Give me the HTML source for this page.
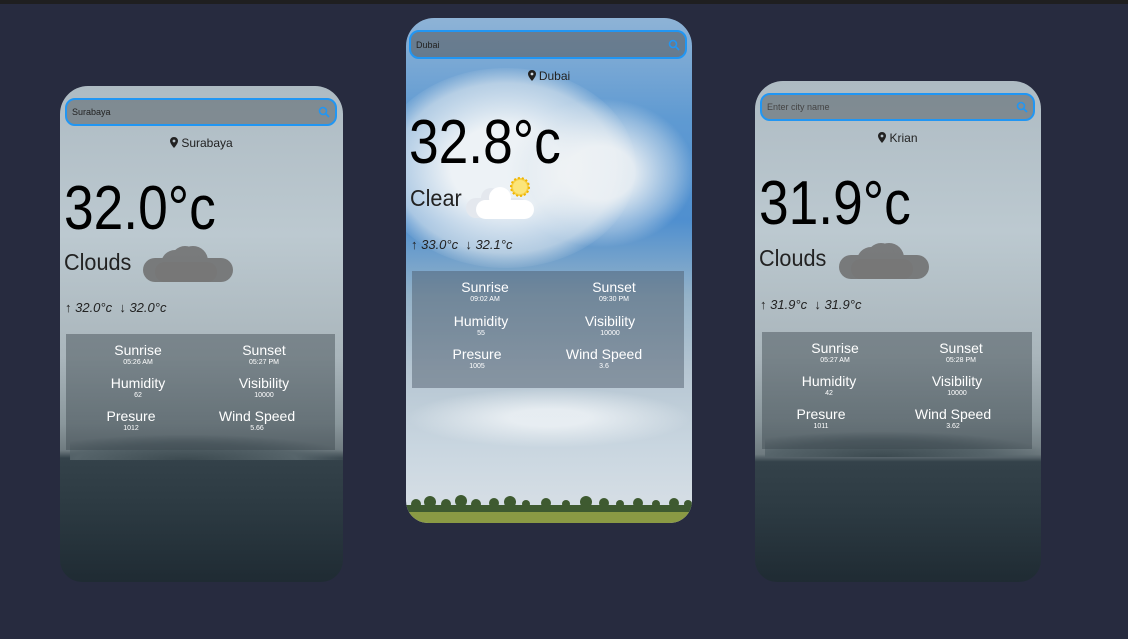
<!DOCTYPE html>
<html><head><meta charset="utf-8"><style>
*{margin:0;padding:0;box-sizing:border-box}
body{width:1128px;height:639px;background:#272b3f;position:relative;overflow:hidden;font-family:"Liberation Sans",sans-serif}
.top{position:absolute;left:0;top:0;width:1128px;height:4px;background:#1f1f20}
.card{position:absolute;overflow:hidden;border-radius:28px 28px 22px 22px}
.ab{position:absolute}
.search{position:absolute;border:2px solid #2196f3;border-radius:10px;background:rgba(95,105,112,.6);font-size:9px;color:#222;padding:0 0 0 5px;display:flex;align-items:center}
.search svg{position:absolute;right:5px;top:50%;margin-top:-6px}
.loc{position:absolute;left:0;right:0;text-align:center;font-size:12px;color:#222}
.loc svg{vertical-align:-1px;margin-right:3px}
.temp{position:absolute;font-size:62px;color:#000;line-height:1;transform:scaleX(.86);transform-origin:0 0}
.desc{position:absolute;font-size:23px;color:#222;line-height:1;transform:scaleX(.94);transform-origin:0 0}
.mm{position:absolute;font-size:13px;font-style:italic;color:#222;line-height:1}
.panel{position:absolute;background:rgba(60,70,78,.45)}
.it{position:absolute;width:130px;text-align:center;color:#fff;line-height:1}
.it b{display:block;font-weight:normal;font-size:14px}
.it i{display:block;font-style:normal;font-size:7px;margin-top:2px}
</style></head><body>
<div class="top"></div>

<!-- LEFT -->
<div class="card" style="left:60px;top:86px;width:283px;height:496px;background:linear-gradient(180deg,#aebbc3 0%,#bcc9d0 30%,#a9b5bb 55%,#8a979c 68%,#6f7b80 73.5%,#34424a 75%,#2c3a42 85%,#1f2b33 100%)">
  <div class="ab" style="left:10px;top:348px;width:290px;height:26px;background:radial-gradient(ellipse at 40% 100%,#3c4a50 0%,#56646a 45%,rgba(90,100,105,0) 70%)"></div>
  <div class="search" style="left:5px;top:12px;width:272px;height:28px">Surabaya<svg width="12" height="12" viewBox="0 0 12 12"><circle cx="5" cy="5" r="3.5" fill="none" stroke="#2196f3" stroke-width="1.6"/><path d="M7.5 7.5L11 11" stroke="#2196f3" stroke-width="1.8"/></svg></div>
  <div class="loc" style="top:50px"><svg width="8" height="11" viewBox="0 0 8 11"><path d="M4 0C1.8 0 0 1.7 0 3.9 0 6.8 4 11 4 11S8 6.8 8 3.9C8 1.7 6.2 0 4 0Z" fill="#222"/><circle cx="4" cy="4" r="1.4" fill="#b5c1c8"/></svg>Surabaya</div>
  <div class="temp" style="left:4px;top:92px">32.0°c</div>
  <div class="desc" style="left:4px;top:165px">Clouds</div>
  <svg class="ab" style="left:83px;top:158px" width="90" height="40" viewBox="0 0 90 40"><g fill="#6e6e6e" opacity=".85"><circle cx="32" cy="20" r="14"/><circle cx="50" cy="17" r="15"/><circle cx="42" cy="16" r="14"/><rect x="0" y="14" width="90" height="24" rx="12"/></g><rect x="12" y="18" width="62" height="20" rx="10" fill="#777"/></svg>
  <div class="mm" style="left:5px;top:215px">↑ 32.0°c &nbsp;↓ 32.0°c</div>
  <div class="panel" style="left:6px;top:248px;width:269px;height:116px">
    <div class="it" style="left:7px;top:9px"><b>Sunrise</b><i>05:26 AM</i></div>
    <div class="it" style="left:133px;top:9px"><b>Sunset</b><i>05:27 PM</i></div>
    <div class="it" style="left:7px;top:42px"><b>Humidity</b><i>62</i></div>
    <div class="it" style="left:133px;top:42px"><b>Visibility</b><i>10000</i></div>
    <div class="it" style="left:0px;top:75px"><b>Presure</b><i>1012</i></div>
    <div class="it" style="left:126px;top:75px"><b>Wind Speed</b><i>5.66</i></div>
  </div>
</div>

<!-- MIDDLE -->
<div class="card" style="left:406px;top:18px;width:286px;height:505px;background:linear-gradient(180deg,#8eb3d6 0%,#5f9ad2 20%,#4f8fcf 40%,#94b2c8 55%,#b6c6d2 70%,#c9d6e0 85%,#d4dde4 95%)">
  <div class="ab" style="left:-30px;top:50px;width:260px;height:200px;border-radius:50%;background:radial-gradient(ellipse,rgba(245,247,248,.95) 30%,rgba(230,236,240,.6) 60%,rgba(255,255,255,0) 72%)"></div>
  <div class="ab" style="left:100px;top:80px;width:190px;height:150px;border-radius:50%;background:radial-gradient(ellipse,rgba(240,243,245,.9) 25%,rgba(220,230,238,.4) 55%,rgba(255,255,255,0) 70%)"></div>
  <div class="ab" style="left:0;top:370px;width:286px;height:60px;background:radial-gradient(ellipse at 50% 50%,rgba(240,244,247,.8) 20%,rgba(255,255,255,0) 70%)"></div>
  <svg class="ab" style="left:0;top:474px" width="286" height="31" viewBox="0 0 286 31"><g fill="#3e5a30"><circle cx="10" cy="12" r="5"/><circle cx="24" cy="10" r="6"/><circle cx="40" cy="12" r="5"/><circle cx="55" cy="9" r="6"/><circle cx="70" cy="12" r="5"/><circle cx="88" cy="11" r="5"/><circle cx="104" cy="10" r="6"/><circle cx="120" cy="12" r="4"/><circle cx="140" cy="11" r="5"/><circle cx="160" cy="12" r="4"/><circle cx="180" cy="10" r="6"/><circle cx="198" cy="11" r="5"/><circle cx="214" cy="12" r="4"/><circle cx="232" cy="11" r="5"/><circle cx="250" cy="12" r="4"/><circle cx="268" cy="11" r="5"/><circle cx="282" cy="12" r="4"/><rect x="0" y="13" width="286" height="7"/></g><rect x="0" y="20" width="286" height="11" fill="#8a9a44"/></svg>
  <div class="search" style="left:3px;top:12px;width:278px;height:29px;background:rgba(90,98,106,.65)">Dubai<svg width="12" height="12" viewBox="0 0 12 12"><circle cx="5" cy="5" r="3.5" fill="none" stroke="#2196f3" stroke-width="1.6"/><path d="M7.5 7.5L11 11" stroke="#2196f3" stroke-width="1.8"/></svg></div>
  <div class="loc" style="top:51px"><svg width="8" height="11" viewBox="0 0 8 11"><path d="M4 0C1.8 0 0 1.7 0 3.9 0 6.8 4 11 4 11S8 6.8 8 3.9C8 1.7 6.2 0 4 0Z" fill="#222"/><circle cx="4" cy="4" r="1.4" fill="#cfd9e2"/></svg>Dubai</div>
  <div class="temp" style="left:3px;top:94px">32.8°c</div>
  <div class="desc" style="left:4px;top:169px">Clear</div>
  <svg class="ab" style="left:60px;top:158px" width="75" height="45" viewBox="0 0 75 45"><circle cx="54" cy="11" r="9" fill="#f7d24a" stroke="#f0b400" stroke-width="2" stroke-dasharray="2 2"/><circle cx="54" cy="11" r="7" fill="#fbe57a"/><g fill="#e4e8ee"><rect x="0" y="22" width="62" height="20" rx="10"/><circle cx="25" cy="22" r="10"/></g><g fill="#fff"><rect x="10" y="24" width="58" height="19" rx="9.5"/><circle cx="34" cy="22" r="11"/></g></svg>
  <div class="mm" style="left:5px;top:220px">↑ 33.0°c &nbsp;↓ 32.1°c</div>
  <div class="panel" style="left:6px;top:253px;width:272px;height:117px;background:rgba(70,85,100,.45)">
    <div class="it" style="left:8px;top:9px"><b>Sunrise</b><i>09:02 AM</i></div>
    <div class="it" style="left:137px;top:9px"><b>Sunset</b><i>09:30 PM</i></div>
    <div class="it" style="left:4px;top:43px"><b>Humidity</b><i>55</i></div>
    <div class="it" style="left:133px;top:43px"><b>Visibility</b><i>10000</i></div>
    <div class="it" style="left:0px;top:76px"><b>Presure</b><i>1005</i></div>
    <div class="it" style="left:127px;top:76px"><b>Wind Speed</b><i>3.6</i></div>
  </div>
</div>

<!-- RIGHT -->
<div class="card" style="left:755px;top:81px;width:286px;height:501px;background:linear-gradient(180deg,#aebbc3 0%,#bcc9d0 30%,#a9b5bb 55%,#8a979c 68%,#6f7b80 74.5%,#34424a 76%,#2c3a42 86%,#1f2b33 100%)">
  <div class="ab" style="left:10px;top:350px;width:290px;height:26px;background:radial-gradient(ellipse at 40% 100%,#3c4a50 0%,#56646a 45%,rgba(90,100,105,0) 70%)"></div>
  <div class="search" style="left:5px;top:12px;width:275px;height:28px;color:#444">Enter city name<svg width="12" height="12" viewBox="0 0 12 12"><circle cx="5" cy="5" r="3.5" fill="none" stroke="#2196f3" stroke-width="1.6"/><path d="M7.5 7.5L11 11" stroke="#2196f3" stroke-width="1.8"/></svg></div>
  <div class="loc" style="top:50px"><svg width="8" height="11" viewBox="0 0 8 11"><path d="M4 0C1.8 0 0 1.7 0 3.9 0 6.8 4 11 4 11S8 6.8 8 3.9C8 1.7 6.2 0 4 0Z" fill="#222"/><circle cx="4" cy="4" r="1.4" fill="#b5c1c8"/></svg>Krian</div>
  <div class="temp" style="left:4px;top:92px">31.9°c</div>
  <div class="desc" style="left:4px;top:166px">Clouds</div>
  <svg class="ab" style="left:84px;top:160px" width="90" height="40" viewBox="0 0 90 40"><g fill="#6e6e6e" opacity=".85"><circle cx="32" cy="20" r="14"/><circle cx="50" cy="17" r="15"/><circle cx="42" cy="16" r="14"/><rect x="0" y="14" width="90" height="24" rx="12"/></g><rect x="12" y="18" width="62" height="20" rx="10" fill="#777"/></svg>
  <div class="mm" style="left:5px;top:217px">↑ 31.9°c &nbsp;↓ 31.9°c</div>
  <div class="panel" style="left:7px;top:251px;width:270px;height:117px">
    <div class="it" style="left:8px;top:9px"><b>Sunrise</b><i>05:27 AM</i></div>
    <div class="it" style="left:134px;top:9px"><b>Sunset</b><i>05:28 PM</i></div>
    <div class="it" style="left:2px;top:42px"><b>Humidity</b><i>42</i></div>
    <div class="it" style="left:130px;top:42px"><b>Visibility</b><i>10000</i></div>
    <div class="it" style="left:-6px;top:75px"><b>Presure</b><i>1011</i></div>
    <div class="it" style="left:126px;top:75px"><b>Wind Speed</b><i>3.62</i></div>
  </div>
</div>
</body></html>
